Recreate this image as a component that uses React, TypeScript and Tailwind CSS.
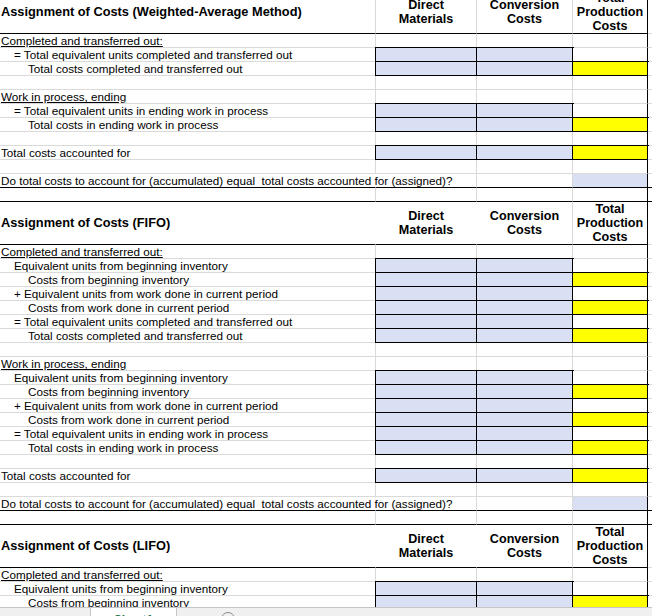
import React from 'react'

type DFill = 'none' | 'yellow' | 'blue'

interface Line {
  label?: string
  indent?: 0 | 1 | 2
  underline?: boolean
  box?: boolean
  d?: DFill
  black?: boolean
  overflow?: boolean
}

const GRID = 'grid grid-cols-[376px_101px_96px_75px_1fr]'
const BLUE = 'bg-[#d9e0f3]'
const RING = 'shadow-[0_0_0_1px_#000]'

const WEIGHTED: Line[] = [
  { label: 'Completed and transferred out:', underline: true },
  { label: '= Total equivalent units completed and transferred out', indent: 1, box: true },
  { label: 'Total costs completed and transferred out', indent: 2, box: true, d: 'yellow' },
  {},
  { label: 'Work in process, ending', underline: true },
  { label: '= Total equivalent units in ending work in process', indent: 1, box: true },
  { label: 'Total costs in ending work in process', indent: 2, box: true, d: 'yellow' },
  {},
  { label: 'Total costs accounted for', box: true, d: 'yellow' },
  {},
  { label: 'Do total costs to account for (accumulated) equal  total costs accounted for (assigned)?', d: 'blue', black: true, overflow: true },
  { black: true },
]

const FIFO: Line[] = [
  { label: 'Completed and transferred out:', underline: true },
  { label: 'Equivalent units from beginning inventory', indent: 1, box: true },
  { label: 'Costs from beginning inventory', indent: 2, box: true, d: 'yellow' },
  { label: '+ Equivalent units from work done in current period', indent: 1, box: true },
  { label: 'Costs from work done in current period', indent: 2, box: true, d: 'yellow' },
  { label: '= Total equivalent units completed and transferred out', indent: 1, box: true },
  { label: 'Total costs completed and transferred out', indent: 2, box: true, d: 'yellow' },
  {},
  { label: 'Work in process, ending', underline: true },
  { label: 'Equivalent units from beginning inventory', indent: 1, box: true },
  { label: 'Costs from beginning inventory', indent: 2, box: true, d: 'yellow' },
  { label: '+ Equivalent units from work done in current period', indent: 1, box: true },
  { label: 'Costs from work done in current period', indent: 2, box: true, d: 'yellow' },
  { label: '= Total equivalent units in ending work in process', indent: 1, box: true },
  { label: 'Total costs in ending work in process', indent: 2, box: true, d: 'yellow' },
  {},
  { label: 'Total costs accounted for', box: true, d: 'yellow' },
  {},
  { label: 'Do total costs to account for (accumulated) equal  total costs accounted for (assigned)?', d: 'blue', black: true, overflow: true },
  { black: true },
]

const LIFO: Line[] = [
  { label: 'Completed and transferred out:', underline: true },
  { label: 'Equivalent units from beginning inventory', indent: 1, box: true },
  { label: 'Costs from beginning inventory', indent: 2, box: true, d: 'yellow' },
  { label: '+ Equivalent units from work done in current period', indent: 1, box: true },
]

function Row({ line }: { line: Line }) {
  const bottom = line.black ? 'border-b-black' : 'border-b-[#dadada]'
  const pad = line.indent === 1 ? 'pl-[14px]' : line.indent === 2 ? 'pl-[28px]' : 'pl-px'
  const plain = line.overflow ? '' : 'bg-white'
  const bc = line.box
    ? `${BLUE} ${RING} border-r-black border-b-black`
    : `${plain} border-r-[#dadada] ${bottom}`

  let dc = `bg-white border-r-black ${bottom}`
  if (line.d === 'yellow') dc = `bg-[#ffff00] ${RING} border-r-black border-b-black`
  if (line.d === 'blue') dc = `${BLUE} border-r-black ${bottom}`

  return (
    <div className={`${GRID} h-[14px]`}>
      <div
        className={`h-[14px] border-b border-r ${bottom} ${line.overflow ? 'border-r-white' : 'border-r-[#dadada]'} ${pad} whitespace-pre text-[11.7px] leading-[14px] bg-white`}
      >
        <span className={line.underline ? 'underline underline-offset-[1px]' : ''}>{line.label ?? ''}</span>
      </div>
      <div className={`h-[14px] border-b border-r ${bc}`} />
      <div className={`h-[14px] border-b border-r ${bc}`} />
      <div className={`h-[14px] border-b border-r ${dc}`} />
      <div className={`h-[14px] border-b bg-white ${bottom}`} />
    </div>
  )
}

function Header({ title, first }: { title: string; first?: boolean }) {
  const hidden = first ? 'border-r-[#dadada]' : 'border-r-white'
  return (
    <div className={`${GRID} h-[43px] ${first ? '-mt-[9px]' : ''} font-bold text-[12.6px] leading-[14px]`}>
      <div className={`flex items-center border-b border-r border-b-black ${hidden} pl-px text-[12.8px] whitespace-nowrap bg-white`}>
        {title}
      </div>
      <div className={`flex items-center justify-center text-center border-b border-r border-b-black ${hidden} bg-white`}>
        Direct<br />Materials
      </div>
      <div className="flex items-center justify-center text-center border-b border-r border-b-black border-r-[#dadada] bg-white">
        Conversion<br />Costs
      </div>
      <div className="flex items-center justify-center text-center border-b border-r border-b-black border-r-black bg-white">
        Total<br />Production<br />Costs
      </div>
      <div className="border-b border-b-[#dadada] bg-white" />
    </div>
  )
}

export default function App() {
  return (
    <div className="w-[652px] h-[616px] overflow-hidden bg-white text-black font-['Liberation_Sans',Arial,sans-serif]">
      <div className="h-[607px] overflow-hidden">
        <Header title="Assignment of Costs (Weighted-Average Method)" first />
        {WEIGHTED.map((l, i) => <Row key={`w${i}`} line={l} />)}
        <Header title="Assignment of Costs (FIFO)" />
        {FIFO.map((l, i) => <Row key={`f${i}`} line={l} />)}
        <Header title="Assignment of Costs (LIFO)" />
        {LIFO.map((l, i) => <Row key={`l${i}`} line={l} />)}
      </div>

      {/* sheet tab strip, mostly cut off */}
      <div className="h-[9px] flex border-t border-t-[#c6c6c6] bg-[#f0f0f0] overflow-hidden">
        <div className="w-[90px] shrink-0" />
        <div className="w-[87px] shrink-0 bg-white border-x border-x-[#c6c6c6] text-center text-[12px] font-bold text-[#217346] leading-[14px] pt-[5px]">
          Sheet1
        </div>
        <div className="ml-[44px] mt-[4px] w-[14px] h-[14px] shrink-0 rounded-full border border-[#8a8a8a]" />
      </div>
    </div>
  )
}
